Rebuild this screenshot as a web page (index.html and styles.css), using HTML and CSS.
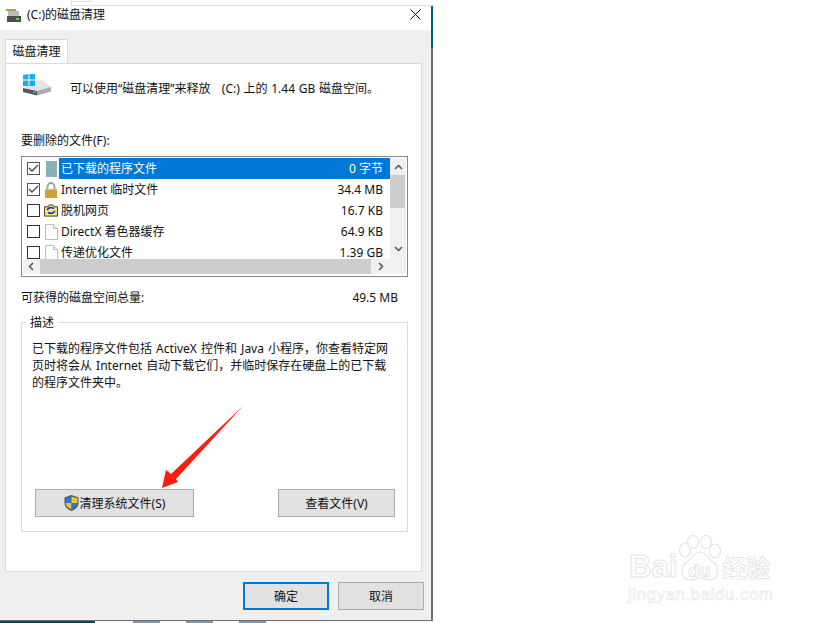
FILE: index.html
```html
<!DOCTYPE html>
<html lang="zh-CN">
<head>
    <meta charset="UTF-8">
    <title>磁盘清理</title>
    <link rel="stylesheet" href="styles.css">
</head>
<body>

    <div class="topstrip"><div class="topstrip-box"></div></div>

    <div class="dialog">
        <div class="titlebar">
            <svg class="title-icon" width="16" height="13" viewBox="0 0 16 13">
                <rect x="0" y="0" width="10" height="2" fill="#b59a58"/>
                <rect x="2" y="2" width="11" height="5" fill="#b9bcb8"/>
                <rect x="1" y="7" width="14" height="6" fill="#4c4f52"/>
                <rect x="10" y="9" width="3" height="2" fill="#6fd050"/>
            </svg>
            <span class="title-text">(C:)的磁盘清理</span>
            <svg class="close-x" width="11" height="11" viewBox="0 0 11 11">
                <path d="M.5.500l10 10M10.500.500l-10 10" stroke="#111" stroke-width="1" fill="none"/>
            </svg>
        </div>

        <div class="tabs"><div class="tab">磁盘清理</div></div>

        <div class="panel">
            <div class="summary">
                <svg class="drive-icon" width="29" height="22" viewBox="0 0 29 22">
                    <path d="M8 8l11-2 9 7-14 4L0 14z" fill="#e4e5e6"/>
                    <path d="M0 14l14 3v4.500L0 18z" fill="#54575a"/>
                    <path d="M14 17l14-4v4.500L14 21.500z" fill="#a8aaac"/>
                    <rect x="10" y="17.500" width="3" height="1.500" fill="#49c06a"/>
                    <path d="M0 1l5.500-1v5.500H0zM6.500 0L12 0v5.500H6.500zM0 6.500h5.500V12H0zM6.500 6.500H12V12H6.500z" fill="#19aef0"/>
                </svg>
                <span class="summary-text">可以使用“磁盘清理”来释放&nbsp;&nbsp; (C:) 上的 1.44 GB 磁盘空间。</span>
            </div>

            <div class="list-label">要删除的文件(F):</div>

            <div class="listbox">
                <div class="list-main">
                    <div class="rows">
                        <div class="row">
                            <span class="check on"><svg width="11" height="9" viewBox="0 0 11 9"><path d="M1 4l3 3 6-6" stroke="#444" stroke-width="1.300" fill="none"/></svg></span>
                            <span class="file-icon"><svg width="11" height="16" viewBox="0 0 11 16"><rect width="11" height="16" fill="#86b1b5"/></svg></span>
                            <span class="row-sel"><span class="row-name">已下载的程序文件</span><span class="row-size">0 字节</span></span>
                        </div>
                        <div class="row">
                            <span class="check on"><svg width="11" height="9" viewBox="0 0 11 9"><path d="M1 4l3 3 6-6" stroke="#444" stroke-width="1.300" fill="none"/></svg></span>
                            <span class="file-icon"><svg width="14" height="16" viewBox="0 0 14 16"><path d="M3.500 8V4.500a3.500 3.500 0 0 1 7 0V8" stroke="#a0a096" stroke-width="1.800" fill="none"/><rect x="1" y="7" width="12" height="9" fill="#e6b648"/><path d="M1 9h12M1 11h12M1 13h12M1 15h12" stroke="#b08428" stroke-width=".8"/></svg></span>
                            <span class="row-plain"><span class="row-name">Internet 临时文件</span><span class="row-size">34.4 MB</span></span>
                        </div>
                        <div class="row">
                            <span class="check"></span>
                            <span class="file-icon"><svg width="15" height="13" viewBox="0 0 15 13"><path d="M.5 2.500h4l1-2h4l1 2h4v10H.5z" fill="#f6e07c" stroke="#3a3418"/><path d="M3.500 6a4 3 0 0 1 7-1.500M11.500 7a4 3 0 0 1-7 1.500" stroke="#1414d8" stroke-width="1.500" fill="none"/></svg></span>
                            <span class="row-plain"><span class="row-name">脱机网页</span><span class="row-size">16.7 KB</span></span>
                        </div>
                        <div class="row">
                            <span class="check"></span>
                            <span class="file-icon"><svg width="13" height="16" viewBox="0 0 13 16"><path d="M.5.500h8l4 4v11H.5z" fill="#fff" stroke="#bdbdbd"/><path d="M8.500.500v4h4" fill="#eee" stroke="#bdbdbd"/></svg></span>
                            <span class="row-plain"><span class="row-name">DirectX 着色器缓存</span><span class="row-size">64.9 KB</span></span>
                        </div>
                        <div class="row">
                            <span class="check"></span>
                            <span class="file-icon"><svg width="13" height="16" viewBox="0 0 13 16"><path d="M.5.500h8l4 4v11H.5z" fill="#fff" stroke="#bdbdbd"/><path d="M8.500.500v4h4" fill="#eee" stroke="#bdbdbd"/></svg></span>
                            <span class="row-plain"><span class="row-name">传递优化文件</span><span class="row-size">1.39 GB</span></span>
                        </div>
                    </div>
                    <div class="vscroll">
                        <svg class="arrow" width="9" height="6" viewBox="0 0 9 6"><path d="M1 5l3.500-3.500L8 5" stroke="#555" stroke-width="1.500" fill="none"/></svg>
                        <div class="vthumb"></div>
                        <svg class="arrow arrow-end" width="9" height="6" viewBox="0 0 9 6"><path d="M1 1l3.500 3.500L8 1" stroke="#555" stroke-width="1.500" fill="none"/></svg>
                    </div>
                </div>
                <div class="hscroll">
                    <svg class="harrow" width="6" height="9" viewBox="0 0 6 9"><path d="M5 1L1.500 4.500 5 8" stroke="#555" stroke-width="1.500" fill="none"/></svg>
                    <div class="hthumb"></div>
                    <svg class="harrow" width="6" height="9" viewBox="0 0 6 9"><path d="M1 1l3.500 3.500L1 8" stroke="#555" stroke-width="1.500" fill="none"/></svg>
                </div>
            </div>

            <div class="total">
                <span>可获得的磁盘空间总量:</span>
                <span>49.5 MB</span>
            </div>

            <div class="desc-group">
                <div class="desc-legend">描述</div>
                <p class="desc-text">已下载的程序文件包括 ActiveX 控件和 Java 小程序，你查看特定网<br>页时将会从 Internet 自动下载它们，并临时保存在硬盘上的已下载<br>的程序文件夹中。</p>
                <div class="desc-buttons">
                    <button class="btn btn-clean">
                        <svg class="shield" width="15" height="16" viewBox="0 0 15 16">
                            <path d="M7.500 0L14.500 2.500V8c0 4-3.500 6.500-7 8-3.500-1.500-7-4-7-8V2.500z" fill="#4b5560"/>
                            <path d="M7.500 1.500V8H1.500V3.300z" fill="#2a7cc8"/>
                            <path d="M7.500 1.500l6 1.800V8h-6z" fill="#f4c430"/>
                            <path d="M1.500 8h6v6.500C4.500 13 1.700 11 1.500 8z" fill="#f4c430"/>
                            <path d="M7.500 8h6c-.2 3-3 5-6 6.500z" fill="#2a7cc8"/>
                        </svg>
                        清理系统文件(S)
                    </button>
                    <button class="btn btn-view">查看文件(V)</button>
                </div>
            </div>
        </div>

        <div class="footer">
            <button class="btn btn-foot btn-default">确定</button>
            <button class="btn btn-foot">取消</button>
        </div>
    </div>

    <div class="bottomstrip">
        <div class="bottom-dark"></div>
        <div class="bottom-bits"><span></span><span></span><span></span></div>
    </div>

    <div class="teal-edge"></div>

    <svg class="red-arrow" width="90" height="90" viewBox="0 0 90 90">
        <path d="M83 2L11 70 6 66 2 84 18 78 16 75z" fill="#fb1d10"/>
    </svg>

    <div class="watermark">
        <div class="wm-logo">
            <span class="wm-bai">Bai</span>
            <div class="wm-pawbox">
                <svg width="44" height="47" viewBox="0 0 44 47">
                    <g fill="#fff" stroke="#e4e4e4" stroke-width="1.200">
                        <ellipse cx="7" cy="15" rx="5.500" ry="7"/>
                        <ellipse cx="15" cy="7" rx="5.500" ry="6.500"/>
                        <ellipse cx="28" cy="7" rx="5.500" ry="6.500"/>
                        <ellipse cx="37" cy="16" rx="5.500" ry="7"/>
                        <path d="M22 17c6 0 8 6 13 10 7 5 6 18-4 18-4 0-6-2-9-2s-5 2-10 2C3 45 2 32 9 27c5-4 7-10 13-10z"/>
                    </g>
                </svg>
                <span class="wm-du">du</span>
            </div>
            <span class="wm-cn">经验</span>
        </div>
        <div class="wm-url">jingyan.baidu.com</div>
    </div>

</body>
</html>
```

FILE: styles.css
```css
html, body {
    margin: 0;
    padding: 0;
    height: 623px;
    overflow: hidden;
    background-color: #fff;
}
body {
    position: relative;
    font-family: "Noto Sans", "Noto Sans CJK SC", sans-serif;
    font-size: 12px;
    color: #111;
}
.topstrip {
    height: 5px;
    width: 361px;
    margin-left: 71px;
    border-left: 1px solid #e2e2e2;
    border-bottom: 1px solid #e2e2e2;
}
.topstrip-box {
    width: 18px;
    height: 1px;
    border-right: 1px solid #e2e2e2;
    border-bottom: 1px solid #e2e2e2;
}
.dialog {
    width: 431px;
    height: 614px;
    background-color: #efefef;
    border-right: 2px solid #707070;
    border-bottom: 1px solid #707070;
    display: flex;
    flex-direction: column;
}
.titlebar {
    height: 24px;
    box-sizing: border-box;
    background-color: #fff;
    display: flex;
    align-items: center;
    padding: 0 10px 6px 6px;
    flex-shrink: 0;
}
.title-text {
    margin-left: 5px;
    flex: 1;
    line-height: 18px;
}
.close-x {
    display: block;
    margin-top: -1px;
}
.tabs {
    padding: 9px 0 0 5px;
    height: 24px;
    display: flex;
    flex-shrink: 0;
}
.tab {
    width: 63px;
    height: 24px;
    box-sizing: border-box;
    background-color: #fff;
    border: 1px solid #d9d9d9;
    border-bottom: none;
    text-align: center;
    line-height: 23px;
}
.panel {
    margin-left: 5px;
    width: 417px;
    height: 509px;
    box-sizing: border-box;
    background-color: #fff;
    border: 1px solid #d9d9d9;
    padding: 0 15px;
}
.summary {
    display: flex;
    align-items: flex-start;
    padding-top: 10px;
    height: 29px;
}
.drive-icon {
    margin-left: 2px;
    flex-shrink: 0;
}
.summary-text {
    margin-left: 18px;
    line-height: 17px;
    margin-top: 6px;
    word-spacing: .6px;
}
.list-label {
    margin-top: 29px;
    height: 17px;
    line-height: 17px;
}
.listbox {
    margin-top: 7px;
    width: 387px;
    height: 121px;
    box-sizing: border-box;
    border: 1px solid #828790;
    padding: 1px;
}
.list-main {
    display: flex;
    height: 101px;
}
.rows {
    flex: 1;
    overflow: hidden;
    height: 101px;
}
.row {
    height: 21px;
    display: flex;
    align-items: center;
    padding-left: 4px;
}
.check {
    width: 11px;
    height: 11px;
    border: 1px solid #333;
    background-color: #fff;
    display: flex;
    align-items: center;
    justify-content: center;
    flex-shrink: 0;
}
.check.on {
    border-color: #555;
}
.file-icon {
    width: 14px;
    margin: 0 1px 0 4px;
    display: flex;
    justify-content: center;
    flex-shrink: 0;
}
.row-sel, .row-plain {
    flex: 1;
    display: flex;
    justify-content: space-between;
    height: 21px;
    line-height: 21px;
    padding: 0 7px 0 2px;
}
.row-sel {
    background-color: #0078d7;
    color: #fff;
}
.vscroll {
    width: 16px;
    background-color: #f0f0f0;
    display: flex;
    flex-direction: column;
    align-items: center;
    padding-top: 6px;
    box-sizing: border-box;
}
.arrow-end {
    margin-top: auto;
    margin-bottom: 7px;
}
.vthumb {
    width: 15px;
    height: 33px;
    margin-top: 5px;
    background-color: #cdcdcd;
    align-self: flex-start;
}
.hscroll {
    height: 15px;
    background-color: #f0f0f0;
    display: flex;
    align-items: center;
    padding: 0 22px 0 5px;
}
.hthumb {
    width: 331px;
    height: 15px;
    margin-left: 6px;
    background-color: #cdcdcd;
    margin-right: auto;
}
.total {
    width: 377px;
    display: flex;
    justify-content: space-between;
    margin-top: 12px;
    height: 17px;
    line-height: 17px;
}
.desc-group {
    position: relative;
    margin-top: 16px;
    width: 387px;
    height: 210px;
    box-sizing: border-box;
    border: 1px solid #dcdcdc;
    padding: 10px 12px 0 10px;
    display: flex;
    flex-direction: column;
}
.desc-legend {
    position: absolute;
    left: 4px;
    top: -8px;
    padding: 0 4px;
    background-color: #fff;
    line-height: 15px;
}
.desc-text {
    margin: 7px 0 0;
    line-height: 17px;
    white-space: nowrap;
    word-spacing: 1px;
}
.desc-buttons {
    margin-top: auto;
    margin-bottom: 14px;
    margin-left: 3px;
    display: flex;
    justify-content: space-between;
}
.btn {
    font-family: "Noto Sans", "Noto Sans CJK SC", sans-serif;
    font-size: 12px;
    color: #111;
    background-color: #e1e1e1;
    border: 1px solid #adadad;
    height: 28px;
    padding: 0;
    display: flex;
    align-items: center;
    justify-content: center;
}
.btn-clean {
    width: 159px;
}
.btn-view {
    width: 117px;
}
.shield {
    margin-right: 1px;
}
.footer {
    display: flex;
    justify-content: flex-end;
    gap: 9px;
    padding: 10px 7px 0 0;
}
.btn-foot {
    width: 86px;
}
.btn-default {
    border: 2px solid #0078d7;
}
.bottomstrip {
    height: 2px;
    display: flex;
}
.bottom-dark {
    width: 95px;
    background-color: #004a52;
}
.bottom-bits {
    display: flex;
    gap: 26px;
    margin-left: 38px;
}
.bottom-bits span {
    width: 27px;
    background-color: #8492a6;
}
.teal-edge {
    position: absolute;
    left: 431px;
    top: 6px;
    width: 2px;
    height: 42px;
    background-color: #00606b;
}
.red-arrow {
    position: absolute;
    left: 160px;
    top: 404px;
}
.watermark {
    position: absolute;
    left: 629px;
    top: 535px;
    color: #fff;
}
.wm-logo {
    display: flex;
    align-items: flex-end;
    height: 47px;
}
.wm-bai {
    font-family: "Liberation Sans", sans-serif;
    font-size: 31px;
    font-weight: bold;
    line-height: 30px;
    color: #fff;
    -webkit-text-stroke: 1px #e4e4e4;
}
.wm-pawbox {
    position: relative;
    height: 47px;
    margin-left: 1px;
}
.wm-pawbox svg {
    display: block;
}
.wm-du {
    position: absolute;
    left: 10px;
    top: 27px;
    font-family: "Liberation Sans", sans-serif;
    font-size: 18px;
    line-height: 18px;
    font-weight: bold;
    color: #fff;
    -webkit-text-stroke: .7px #dcdcdc;
}
.wm-cn {
    font-size: 24px;
    line-height: 28px;
    font-weight: bold;
    color: #fff;
    -webkit-text-stroke: .7px #dedede;
}
.wm-url {
    font-family: "Liberation Sans", sans-serif;
    font-size: 17px;
    line-height: 20px;
    letter-spacing: .5px;
    margin: 3px 0 0 -1px;
    color: #fff;
    -webkit-text-stroke: .6px #e6e6e6;
}
```
